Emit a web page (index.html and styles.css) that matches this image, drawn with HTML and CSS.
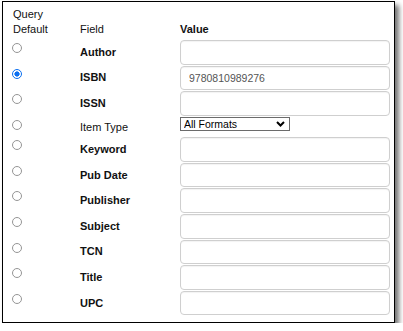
FILE: index.html
```html
<!DOCTYPE html>
<html>
<head>
<meta charset="utf-8">
<link rel="stylesheet" href="styles.css">
</head>
<body>
<div class="panel">
  <table class="search">
    <thead>
      <tr>
        <th class="c-radio">Query<br>Default</th>
        <th class="c-field">Field</th>
        <th class="c-value">Value</th>
      </tr>
    </thead>
    <tbody>
      <tr>
        <td class="c-radio"><input type="radio" name="q" class="rad"></td>
        <td class="c-field">Author</td>
        <td class="c-value"><input type="text" class="txt"></td>
      </tr>
      <tr>
        <td class="c-radio"><input type="radio" name="q" class="rad" checked></td>
        <td class="c-field">ISBN</td>
        <td class="c-value"><input type="text" class="txt" value="9780810989276"></td>
      </tr>
      <tr>
        <td class="c-radio"><input type="radio" name="q" class="rad"></td>
        <td class="c-field">ISSN</td>
        <td class="c-value"><input type="text" class="txt"></td>
      </tr>
      <tr class="row-select">
        <td class="c-radio"><input type="radio" name="q" class="rad"></td>
        <td class="c-field c-plain">Item Type</td>
        <td class="c-value c-top"><select class="sel"><option>All Formats</option></select></td>
      </tr>
      <tr>
        <td class="c-radio"><input type="radio" name="q" class="rad"></td>
        <td class="c-field">Keyword</td>
        <td class="c-value"><input type="text" class="txt"></td>
      </tr>
      <tr>
        <td class="c-radio"><input type="radio" name="q" class="rad"></td>
        <td class="c-field">Pub Date</td>
        <td class="c-value"><input type="text" class="txt"></td>
      </tr>
      <tr>
        <td class="c-radio"><input type="radio" name="q" class="rad"></td>
        <td class="c-field">Publisher</td>
        <td class="c-value"><input type="text" class="txt"></td>
      </tr>
      <tr>
        <td class="c-radio"><input type="radio" name="q" class="rad"></td>
        <td class="c-field">Subject</td>
        <td class="c-value"><input type="text" class="txt"></td>
      </tr>
      <tr>
        <td class="c-radio"><input type="radio" name="q" class="rad"></td>
        <td class="c-field">TCN</td>
        <td class="c-value"><input type="text" class="txt"></td>
      </tr>
      <tr>
        <td class="c-radio"><input type="radio" name="q" class="rad"></td>
        <td class="c-field">Title</td>
        <td class="c-value"><input type="text" class="txt"></td>
      </tr>
      <tr>
        <td class="c-radio"><input type="radio" name="q" class="rad"></td>
        <td class="c-field">UPC</td>
        <td class="c-value"><input type="text" class="txt"></td>
      </tr>
    </tbody>
  </table>
</div>
</body>
</html>
```

FILE: styles.css
```css
html, body {
  margin: 0;
  padding: 0;
  background: #fff;
}

body {
  font-family: "Liberation Sans", Arial, sans-serif;
  font-size: 11px;
  color: #111;
}

.panel {
  margin: 1px 0 0 2px;
  border: 1px solid #000;
  box-shadow: 4px 4px 5px rgba(0, 0, 0, 0.55);
  background: #fff;
  padding: 5px 0 0 8px;
  box-sizing: content-box;
  width: 383px;
  height: 315px;
}

.search {
  border-collapse: collapse;
  border-spacing: 0;
}

.search th,
.search td {
  padding: 0;
  text-align: left;
}

.search th {
  font-weight: normal;
  line-height: 15px;
  vertical-align: bottom;
  padding-bottom: 2.5px;
}

.search th.c-radio {
  padding-left: 2px;
}

.search th.c-value {
  font-weight: bold;
}

.c-radio {
  width: 67px;
  vertical-align: top;
}

.c-field {
  width: 100px;
  font-weight: bold;
  vertical-align: middle;
  line-height: 15px;
}

.search td.c-plain {
  font-weight: normal;
  padding-top: 3px;
}

.c-value {
  width: 210px;
  vertical-align: top;
}

.rad {
  -webkit-appearance: none;
  appearance: none;
  display: block;
  width: 10px;
  height: 10px;
  margin: 3.5px 0 0 1px;
  border: 1px solid #959595;
  border-radius: 50%;
  background: #fff;
  box-sizing: border-box;
}

.rad:checked {
  border-color: #0b6ff0;
  background: radial-gradient(circle, #0b6ff0 0, #0b6ff0 2.3px, #fff 2.9px);
}

.txt {
  display: block;
  box-sizing: border-box;
  width: 210px;
  height: 24.6px;
  margin: 0.5px 0;
  padding: 0 0 0 8px;
  border: 1px solid #cfcfcf;
  border-radius: 4px;
  box-shadow: inset 0 1px 1px rgba(0, 0, 0, 0.05);
  font-family: "Liberation Sans", Arial, sans-serif;
  font-size: 10.5px;
  color: #555;
  background: #fff;
  outline: none;
}

.row-select td {
  height: 17.4px;
}

.sel {
  -webkit-appearance: none;
  appearance: none;
  display: block;
  box-sizing: border-box;
  width: 110px;
  height: 14px;
  margin: 0.5px 0 0 0;
  padding: 0 0 0 3px;
  border: 1px solid #6b6b6b;
  border-radius: 0;
  font-family: "Liberation Sans", Arial, sans-serif;
  font-size: 10.5px;
  line-height: 12px;
  color: #000;
  background: #fff url("data:image/svg+xml;utf8,<svg xmlns='http://www.w3.org/2000/svg' width='9' height='6' viewBox='0 0 9 6'><path d='M1 1 L4.5 4.5 L8 1' fill='none' stroke='black' stroke-width='2'/></svg>") no-repeat right 4px center;
}
```
